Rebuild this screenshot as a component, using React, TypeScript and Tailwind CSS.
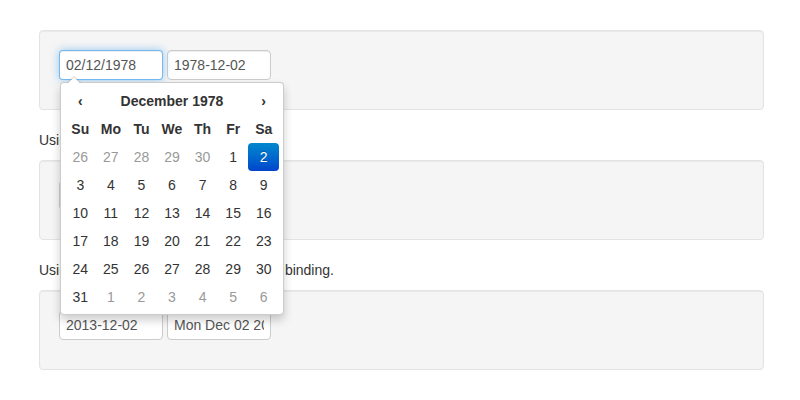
import React from "react"

const font = { fontFamily: '"Liberation Sans", Arial, sans-serif' }

const weeks: number[][] = [
  [26, 27, 28, 29, 30, 1, 2],
  [3, 4, 5, 6, 7, 8, 9],
  [10, 11, 12, 13, 14, 15, 16],
  [17, 18, 19, 20, 21, 22, 23],
  [24, 25, 26, 27, 28, 29, 30],
  [31, 1, 2, 3, 4, 5, 6],
]

function TextInput({ value, focused }: { value: string; focused?: boolean }) {
  return (
    <input
      readOnly
      value={value}
      className={
        "w-[104px] h-[30px] px-[6px] rounded-[4px] border bg-white text-[14px] text-[#555] outline-none " +
        (focused
          ? "border-[rgba(82,168,236,0.8)] shadow-[inset_0_1px_1px_rgba(0,0,0,0.075),0_0_8px_rgba(82,168,236,0.6)]"
          : "border-[#ccc] shadow-[inset_0_1px_1px_rgba(0,0,0,0.075)]")
      }
    />
  )
}

function DatePicker() {
  return (
    <div className="absolute left-[1px] top-[32px] z-10 w-[224px] px-[4px] pt-[4px] pb-[3px] bg-white border border-[rgba(0,0,0,0.2)] rounded-[4px] shadow-[0_5px_10px_rgba(0,0,0,0.2)] text-[14px] text-[#333]">
      <div className="absolute -top-[7px] left-[6px] w-0 h-0 border-x-[7px] border-x-transparent border-b-[7px] border-b-[rgba(0,0,0,0.2)]" />
      <div className="absolute -top-[6px] left-[7px] w-0 h-0 border-x-[6px] border-x-transparent border-b-[6px] border-b-white" />
      <div className="grid grid-cols-7 text-center">
        <div className="h-[28px] leading-[28px] font-bold">‹</div>
        <div className="col-span-5 h-[28px] leading-[28px] font-bold">December 1978</div>
        <div className="h-[28px] leading-[28px] font-bold">›</div>
        {["Su", "Mo", "Tu", "We", "Th", "Fr", "Sa"].map((d) => (
          <div key={d} className="h-[28px] leading-[28px] font-bold">
            {d}
          </div>
        ))}
        {weeks.map((week, wi) =>
          week.map((day, di) => {
            const outside = (wi === 0 && day > 20) || (wi === 5 && day < 20)
            const selected = wi === 0 && day === 2
            return (
              <div
                key={wi + "-" + di}
                className={
                  "h-[28px] leading-[28px] rounded-[4px] " +
                  (selected
                    ? "bg-linear-to-b from-[#0088cc] to-[#0044cc] text-white [text-shadow:0_-1px_0_rgba(0,0,0,0.25)]"
                    : outside
                      ? "text-[#999]"
                      : "")
                }
              >
                {day}
              </div>
            )
          })
        )}
      </div>
    </div>
  )
}

function Well({ children }: { children: React.ReactNode }) {
  return (
    <div className="min-h-[20px] p-[19px] mb-[20px] bg-[#f5f5f5] border border-[#e3e3e3] rounded-[4px] shadow-[inset_0_1px_1px_rgba(0,0,0,0.05)]">
      {children}
    </div>
  )
}

export default function App() {
  return (
    <div style={font} className="w-[800px] h-[400px] bg-white pt-[30px] pl-[39px] text-[14px] leading-[20px] text-[#333]">
      <div className="w-[725px]">
        <Well>
          <div className="flex gap-[4px] mb-[10px]">
            <div className="relative">
              <TextInput value="02/12/1978" focused />
              <DatePicker />
            </div>
            <TextInput value="1978-12-02" />
          </div>
        </Well>
        <p className="mb-[10px]">Using the picker with a format option.</p>
        <Well>
          <div className="flex gap-[4px] mb-[10px]">
            <TextInput value="12/02/1978" />
            <TextInput value="1978-12-02" />
          </div>
        </Well>
        <p className="mb-[10px]">Using the picker with a Date type value binding.</p>
        <Well>
          <div className="flex gap-[4px] mb-[10px]">
            <TextInput value="2013-12-02" />
            <TextInput value="Mon Dec 02 2013 00:00:00" />
          </div>
        </Well>
      </div>
    </div>
  )
}
